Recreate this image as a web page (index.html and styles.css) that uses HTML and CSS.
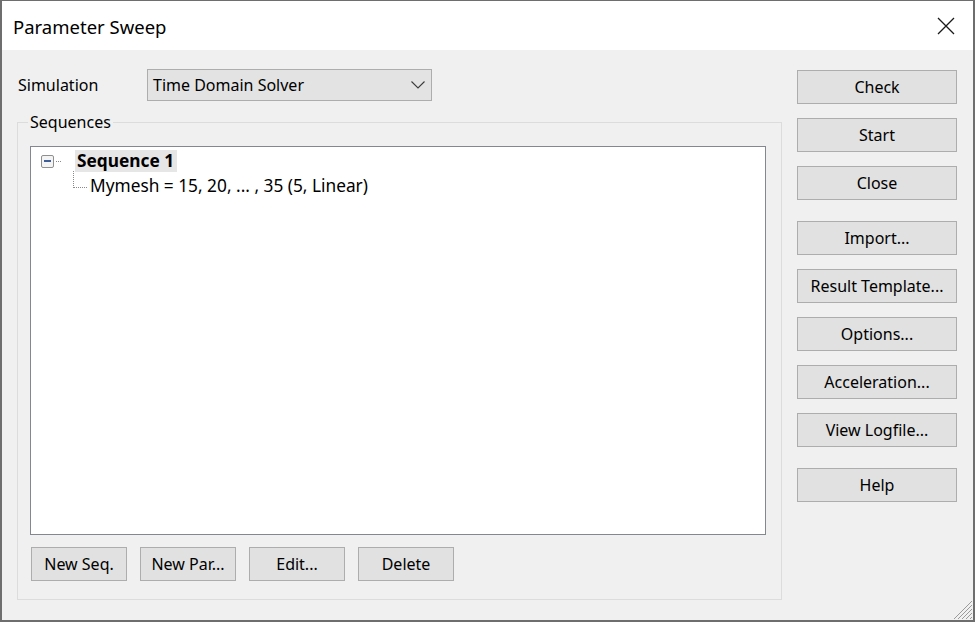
FILE: index.html
```html
<!DOCTYPE html>
<html lang="en">
<head>
  <meta charset="UTF-8" />
  <meta name="viewport" content="width=device-width, initial-scale=1.0" />
  <title>Parameter Sweep</title>
  <link rel="stylesheet" href="styles.css">
</head>
<body>

<div class="dialog">

  <!-- TITLE BAR -->
  <div class="titlebar">
    <span class="title">Parameter Sweep</span>
    <button class="close-x" title="Close">
      <svg width="18" height="18" viewBox="0 0 18 18">
        <path d="M1 1 L17 17 M17 1 L1 17" stroke="#1a1a1a" stroke-width="1.3" fill="none"/>
      </svg>
    </button>
  </div>

  <div class="content">

    <!-- LEFT SIDE -->
    <div class="main-col">
      <div class="sim-row">
        <label class="sim-label">Simulation</label>
        <div class="combo">
          <span>Time Domain Solver</span>
          <svg width="14" height="8" viewBox="0 0 14 8">
            <path d="M0.5 0.5 L7 7 L13.5 0.5" stroke="#3c3c3c" stroke-width="1.1" fill="none"/>
          </svg>
        </div>
      </div>

      <fieldset class="group">
        <legend>Sequences</legend>

        <div class="tree">
          <div class="node">
            <span class="expander"><span class="minus"></span></span>
            <span class="stub"></span>
            <span class="node-label selected">Sequence 1</span>
          </div>
          <div class="child">
            <span class="elbow"></span>
            <span class="node-label">Mymesh = 15, 20, ... , 35 (5, Linear)</span>
          </div>
        </div>

        <div class="tree-buttons">
          <button class="btn small">New Seq.</button>
          <button class="btn small">New Par...</button>
          <button class="btn small">Edit...</button>
          <button class="btn small">Delete</button>
        </div>
      </fieldset>
    </div>

    <!-- RIGHT SIDE -->
    <div class="side-col">
      <div class="btn-group">
        <button class="btn">Check</button>
        <button class="btn">Start</button>
        <button class="btn">Close</button>
      </div>
      <div class="btn-group">
        <button class="btn">Import...</button>
        <button class="btn">Result Template...</button>
        <button class="btn">Options...</button>
        <button class="btn">Acceleration...</button>
        <button class="btn">View Logfile...</button>
      </div>
      <div class="btn-group">
        <button class="btn">Help</button>
      </div>
    </div>

  </div>

  <!-- resize grip -->
  <svg class="grip" width="20" height="20" viewBox="0 0 20 20">
    <path d="M19 5 L5 19 M19 9 L9 19 M19 13 L13 19 M19 17 L17 19 M19 1 L1 19" stroke="#9a9a9a" stroke-width="1" fill="none"/>
  </svg>

</div>

</body>
</html>
```

FILE: styles.css
```css
*, *::before, *::after { box-sizing: border-box; margin: 0; padding: 0; }

:root {
  --face:      #f0f0f0;
  --btn:       #e1e1e1;
  --btn-line:  #adadad;
  --frame:     #dcdcdc;
  --list-line: #828790;
  --text:      #000000;
}

body {
  font-family: "Noto Sans", "Open Sans", Arial, sans-serif;
  font-size: 16px;
  color: var(--text);
  background: #ffffff;
}

.dialog {
  position: relative;
  width: 975px;
  height: 622px;
  background: var(--face);
  border: 2px solid #6e6e6e;
  border-top-width: 1px;
  display: flex;
  flex-direction: column;
}

/* ── TITLE BAR ─────────────────────────────────────────── */
.titlebar {
  height: 49px;
  background: #ffffff;
  display: flex;
  align-items: center;
  justify-content: space-between;
  padding: 0 18px 0 11px;
}

.title {
  font-size: 18.5px;
  margin-top: 2px;
}

.close-x {
  border: none;
  background: none;
  width: 18px;
  height: 18px;
  display: flex;
  margin-top: 1px;
}

/* ── CONTENT ──────────────────────────────────────────── */
.content {
  flex: 1;
  display: flex;
  gap: 15px;
  padding: 19px 15px 0 15px;
}

.main-col {
  width: 765px;
  display: flex;
  flex-direction: column;
}

.sim-row {
  display: flex;
  align-items: center;
  height: 32px;
}

.sim-label {
  width: 130px;
  padding-left: 1px;
}

.combo {
  width: 285px;
  height: 32px;
  background: #e3e3e3;
  border: 1px solid var(--btn-line);
  display: flex;
  align-items: center;
  justify-content: space-between;
  padding: 0 6px 0 5px;
}

/* ── GROUP BOX ────────────────────────────────────────── */
.group {
  margin-top: 11px;
  border: 1px solid var(--frame);
  padding: 14px 15px 17px 12px;
  display: flex;
  flex-direction: column;
  height: 488px;
}

.group legend {
  margin-left: -2px;
  padding: 0 2px;
  line-height: 20px;
}

.tree {
  background: #ffffff;
  border: 1px solid var(--list-line);
  height: 389px;
  padding: 3px 0 0 10px;
  font-size: 17.3px;
}

.node, .child {
  display: flex;
  align-items: center;
  height: 22px;
}

.expander {
  width: 13px;
  height: 13px;
  border: 1px solid #8f8f8f;
  border-radius: 2px;
  background: #f4f4f4;
  display: flex;
  align-items: center;
  justify-content: center;
}

.minus {
  width: 7px;
  height: 2px;
  background: #3d5f96;
}

.stub {
  width: 5px;
  border-top: 1px dotted #8a8a8a;
  margin: 0 14px 0 2px;
}

.node-label {
  padding: 0 3px 0 2px;
  line-height: 22px;
}

.node-label.selected {
  font-weight: 700;
  background: #e6e6e6;
}

.child {
  margin-top: 3px;
  padding-left: 32px;
}

.elbow {
  width: 14px;
  height: 17px;
  border-left: 1px dotted #8a8a8a;
  border-bottom: 1px dotted #8a8a8a;
  margin-top: -14px;
  margin-right: 1px;
}

.tree-buttons {
  display: flex;
  gap: 13px;
  margin-top: 12px;
  padding-left: 1px;
}

/* ── BUTTONS ──────────────────────────────────────────── */
.btn {
  font-family: inherit;
  font-size: 16px;
  color: var(--text);
  background: var(--btn);
  border: 1px solid var(--btn-line);
  height: 34px;
  width: 160px;
}

.btn.small { width: 96px; }

.side-col {
  width: 160px;
  display: flex;
  flex-direction: column;
  gap: 21px;
  padding-top: 1px;
}

.btn-group {
  display: flex;
  flex-direction: column;
  gap: 14px;
}

.grip {
  position: absolute;
  right: 0;
  bottom: 0;
}
```
